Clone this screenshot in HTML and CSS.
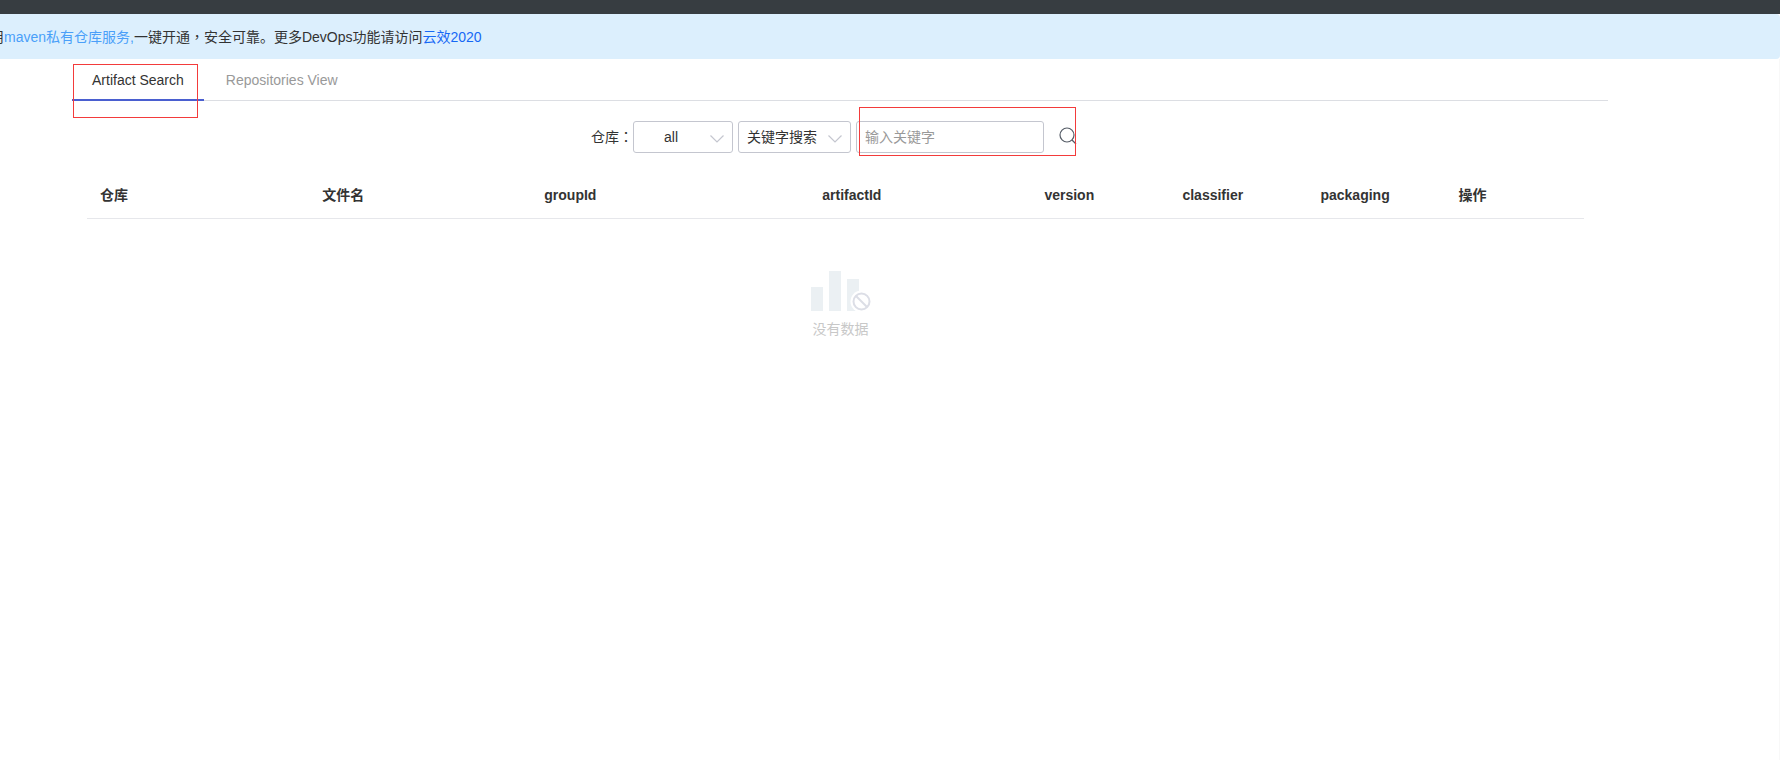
FILE: index.html
```html
<!DOCTYPE html>
<html lang="zh-CN">
<head>
<meta charset="utf-8">
<title>Artifact Search</title>
<link rel="stylesheet" href="styles.css">
</head>
<body>
<header class="topbar"></header>
<div class="notice">
  <p class="notice-text">用<a class="link-light" href="#">maven私有仓库服务</a><span class="comma">,</span>一键开通<span class="mid" lang="zh-TW">，</span>安全可靠。更多DevOps功能请访问<a class="link-strong" href="#">云效2020</a></p>
</div>
<main class="page">
  <nav class="tabs">
    <a class="tab active" href="#">Artifact Search<span class="mark mark-tab"></span></a>
    <a class="tab" href="#">Repositories View</a>
  </nav>
  <form class="search">
    <label for="repo">仓库<span class="mid" lang="zh-TW">：</span></label>
    <div class="pick pick-repo">
      <select id="repo"><option>all</option></select>
      <svg class="chevron" viewBox="0 0 14 8"><path d="M.5 .5L7 7L13.500 .5"/></svg>
    </div>
    <div class="pick pick-mode">
      <select aria-label="搜索方式"><option>关键字搜索</option></select>
      <svg class="chevron" viewBox="0 0 14 8"><path d="M.5 .5L7 7L13.500 .5"/></svg>
    </div>
    <div class="query">
      <input type="text" placeholder="输入关键字" aria-label="输入关键字">
      <button type="button" aria-label="搜索">
        <svg viewBox="0 0 18 18"><circle cx="8" cy="8" r="7"/><path d="M13 13L17 17"/></svg>
      </button>
      <span class="mark mark-query"></span>
    </div>
  </form>
  <div class="results">
    <table>
      <colgroup><col class="c16"><col class="c16"><col class="c20"><col class="c16"><col class="c10"><col class="c10"><col class="c10"><col></colgroup>
      <thead>
        <tr><th>仓库</th><th>文件名</th><th>groupId</th><th>artifactId</th><th>version</th><th>classifier</th><th>packaging</th><th>操作</th></tr>
      </thead>
    </table>
    <div class="empty">
      <svg viewBox="0 0 60 42">
        <path class="bars" d="M0 16H12V40H0ZM18 0H30V40H18ZM36 8H48V40H36Z"/>
        <circle class="halo" cx="50.500" cy="30.500" r="11"/>
        <circle class="ban" cx="50.500" cy="30.500" r="8"/>
        <path class="ban" d="M45 25L56 36"/>
      </svg>
      <p>没有数据</p>
    </div>
  </div>
</main>
</body>
</html>
```
FILE: styles.css
```css
* { box-sizing: border-box; }
body {
  margin: 0;
  background: #fff;
  color: #333;
  font: 14px/20px "Liberation Sans", "Noto Sans CJK SC", sans-serif;
}
a { text-decoration: none; }
p { margin: 0; }
.topbar { height: 14px; background: #373d41; }
.notice {
  display: flex;
  align-items: center;
  height: 45px;
  background: #dceffd;
  border-radius: 0 4px 4px 0;
  overflow: hidden;
}
.notice-text { margin-left: -10px; white-space: nowrap; }
.mid { font-family: "Noto Sans CJK TC", sans-serif; line-height: 1; }
.link-light, .comma { color: #4a9ff9; }
.link-strong { color: #1668f5; }
.page { min-height: calc(100vh - 59px); padding: 0 171px 0 72px; border-right: 1px solid #f8f8f8; }
.tabs { display: flex; gap: 2px; height: 42px; border-bottom: 1px solid #dcdee3; }
.tab {
  position: relative;
  height: 42px;
  padding: 11px 20px 0;
  color: #999;
}
.tab.active { color: #333; border-bottom: 2px solid #4a5fd0; }
.mark { position: absolute; border: 1px solid #f33b3b; pointer-events: none; }
.mark-tab { top: 5px; left: 1px; width: 125px; height: 54px; }
.mark-query { top: -14px; left: 3px; width: 217px; height: 49px; }
.search {
  display: flex;
  justify-content: center;
  align-items: center;
  gap: 5px;
  padding: 20px 12px 0 0;
}
.search label { white-space: nowrap; margin-right: -5px; }
.pick { position: relative; display: flex; }
.pick-repo { width: 100px; }
.pick-mode { width: 113px; }
select, input {
  height: 32px;
  border: 1px solid #c4c6cf;
  border-radius: 3px;
  background: #fff;
  color: #333;
  font: inherit;
}
select { appearance: none; width: 100%; padding: 0 8px; }
.pick-repo select { padding-left: 30px; }
.chevron { position: absolute; right: 9px; top: 14px; width: 14px; height: 8px; pointer-events: none; }
.chevron path { fill: none; stroke: #c4c6cf; stroke-width: 1.2; }
.query { position: relative; display: flex; align-items: center; }
.query input { width: 188px; padding: 0 8px; }
.query input::placeholder { color: #999; }
.query button { display: flex; margin: 0 0 2px 15px; padding: 0; border: 0; background: none; }
.query button svg { width: 18px; height: 18px; fill: none; stroke: #555c66; stroke-width: 1.2; }
.results { padding: 21px 24px 0 15px; }
table { width: 100%; border-collapse: collapse; table-layout: fixed; }
.c16 { width: 14.84%; }
.c20 { width: 18.57%; }
.c10 { width: 9.22%; }
th { padding: 11px 12px 13px 13px; text-align: left; border-bottom: 1px solid #e6e7eb; }
.empty {
  display: flex;
  flex-direction: column;
  align-items: center;
  gap: 6px;
  padding: 52px 0 0 10px;
  color: #c8c8c8;
}
.empty svg { width: 60px; height: 42px; overflow: visible; }
.bars { fill: #ebf0f3; }
.halo { fill: #fff; }
.ban { fill: none; stroke: #dcdee6; stroke-width: 2; }
```
